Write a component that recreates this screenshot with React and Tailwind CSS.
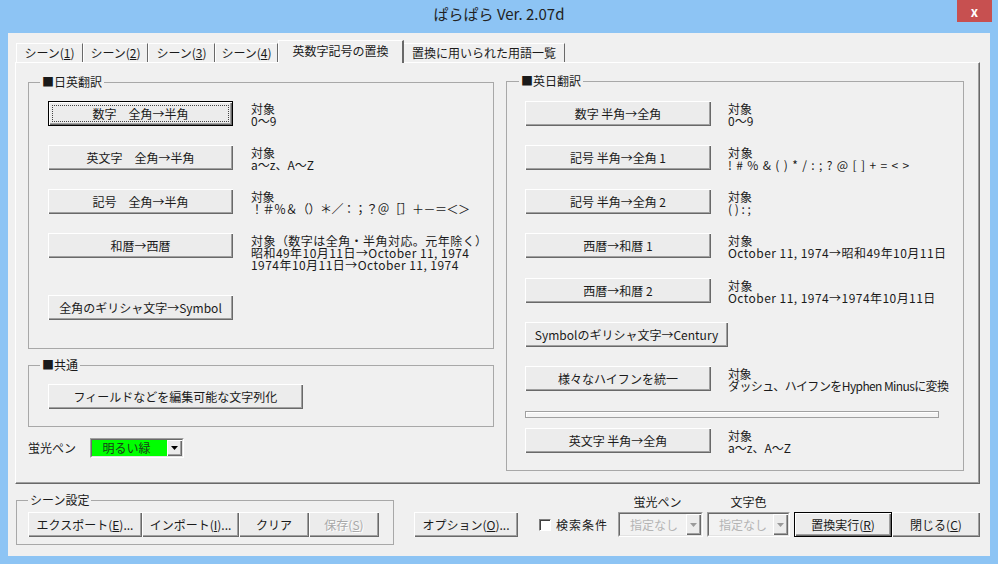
import React from 'react';

const SH = 'shadow-[inset_1px_1px_0_#ffffff,inset_-1px_-1px_0_#696969,inset_-2px_-2px_0_#a0a0a0]';

function Btn({ children, className = '', focus = false, def = false, disabled = false }) {
  return (
    <div
      className={`relative flex shrink-0 items-center justify-center bg-[#ececec] text-[12px] leading-[14px] whitespace-nowrap ${SH} ${
        disabled ? 'text-[#a8a8a8] [text-shadow:1px_1px_0_#ffffff]' : 'text-[#1a1a1a]'
      } ${focus || def ? 'border border-black' : ''} ${className}`}
    >
      {focus && <div className="absolute inset-[3px] border border-dotted border-[#444]" />}
      <span className="relative">{children}</span>
    </div>
  );
}

function Desc({ lines, className = '' }) {
  return (
    <div className={`text-[12px] leading-[12px] pt-[2px] text-[#1a1a1a] whitespace-nowrap ${className}`}>
      {lines.map((l, i) => (
        <div key={i}>{l}</div>
      ))}
    </div>
  );
}

function Row({ h, btn, bw, desc, dm, focus, descClass }) {
  return (
    <div className={`flex items-start ${h}`}>
      <Btn className={`${bw} h-[25px]`} focus={focus}>
        {btn}
      </Btn>
      {desc && <Desc lines={desc} className={`${dm} ${descClass || ''}`} />}
    </div>
  );
}

function Arrow({ color = '#000' }) {
  return (
    <svg width="7" height="4" viewBox="0 0 7 4">
      <path d="M0 0 L7 0 L3.5 4 Z" fill={color} />
    </svg>
  );
}

function Combo({ text, w, green = false }) {
  return (
    <div
      className={`flex shrink-0 border border-t-[#a0a0a0] border-l-[#a0a0a0] border-b-white border-r-white ${w} ${
        green ? 'h-[20px]' : 'h-[25px]'
      }`}
    >
      <div className="flex flex-1 border border-t-[#696969] border-l-[#696969] border-b-[#e3e3e3] border-r-[#e3e3e3]">
        <div
          className={`flex-1 flex items-center text-[12px] leading-[14px] ${
            green ? 'bg-[#00ff00] text-[#1a3a1a] justify-center pr-[6px]' : 'bg-[#f2f2f2] text-[#b4b4b4] pl-[10px]'
          }`}
        >
          {text}
        </div>
        <div className={`flex items-center justify-center w-[15px] bg-[#ececec] ${SH}`}>
          <Arrow color={green ? '#000' : '#9a9a9a'} />
        </div>
      </div>
    </div>
  );
}

export default function App() {
  const tabs = [
    { pre: 'シーン(', k: '1', post: ')', w: 'w-[67px]' },
    { pre: 'シーン(', k: '2', post: ')', w: 'w-[65px]' },
    { pre: 'シーン(', k: '3', post: ')', w: 'w-[67px]' },
    { pre: 'シーン(', k: '4', post: ')', w: 'w-[63px]' },
  ];
  return (
    <div className="w-[998px] h-[564px] bg-[#8dc4f4] flex flex-col font-['Noto_Sans_CJK_JP','Noto_Sans',sans-serif] overflow-hidden">
      {/* title bar */}
      <div className="relative h-[33px] shrink-0 flex justify-center pt-[5px]">
        <span className="text-[15px] leading-[18px] text-[#222]">ぱらぱら Ver. 2.07d</span>
        <div className="absolute top-0 right-[6px] w-[35px] h-[22px] bg-[#c75050] flex items-center justify-center text-white text-[13px] font-bold leading-none">
          x
        </div>
      </div>

      {/* client */}
      <div className="mx-[8px] h-[523px] bg-[#f0f0f0] flex flex-col">
        {/* tabs */}
        <div className="h-[29px] flex items-end pl-[8px] shrink-0">
          {tabs.map((t, i) => (
            <div
              key={i}
              className={`${t.w} h-[19px] flex items-center justify-center border-l border-t border-l-white border-t-white border-r border-r-[#696969] text-[12px] leading-[14px] text-[#1a1a1a]`}
            >
              {t.pre}
              <u>{t.k}</u>
              {t.post}
            </div>
          ))}
          <div className="relative z-10 -mb-px w-[126px] h-[23px] pb-[3px] flex items-center justify-center bg-[#f0f0f0] border-l border-t border-l-white border-t-white border-r-2 border-r-[#696969] text-[12px] leading-[14px] text-[#1a1a1a]">
            英数字記号の置換
          </div>
          <div className="w-[161px] h-[19px] flex items-center justify-center border-t border-t-white border-r border-r-[#696969] text-[12px] leading-[14px] text-[#1a1a1a]">
            置換に用いられた用語一覧
          </div>
        </div>

        {/* panel */}
        <div className="ml-[7px] w-[965px] h-[422px] shrink-0 border-l border-t border-l-white border-t-white border-r border-b border-r-[#696969] border-b-[#696969] shadow-[inset_-1px_-1px_0_#a0a0a0] flex pt-[11px] pl-[12px] gap-[12px]">
          {/* left column */}
          <div className="w-[466px] flex flex-col mt-[1px]">
            <fieldset className="border border-[#a8a8a8] p-0 m-0">
              <legend className="ml-[11px] px-[2px] text-[12px] leading-[14px] text-[#1a1a1a]">■日英翻訳</legend>
              <div className="pl-[19px] pt-[12px] pb-[28px] flex flex-col">
                <Row h="h-[44px]" bw="w-[185px]" dm="ml-[18px]" focus btn="数字　全角→半角" desc={['対象', '0〜9']} />
                <Row h="h-[44px]" bw="w-[185px]" dm="ml-[18px]" btn="英文字　全角→半角" desc={['対象', 'a〜z、A〜Z']} />
                <Row
                  h="h-[44px]"
                  bw="w-[185px]"
                  dm="ml-[18px]"
                  btn="記号　全角→半角"
                  desc={['対象', '！＃％＆（）＊／：；？＠［］＋－＝＜＞']}
                  descClass="tracking-[-0.5px]"
                />
                <Row
                  h="h-[62px]"
                  bw="w-[185px]"
                  dm="ml-[18px]"
                  btn="和暦→西暦"
                  desc={['対象（数字は全角・半角対応。元年除く）', '昭和49年10月11日→October 11, 1974', '1974年10月11日→October 11, 1974']}
                  descClass="tracking-[0.45px]"
                />
                <Row h="h-[25px]" bw="w-[185px]" btn="全角のギリシャ文字→Symbol" />
              </div>
            </fieldset>

            <fieldset className="border border-[#a8a8a8] p-0 m-0 mt-[9px]">
              <legend className="ml-[11px] px-[2px] text-[12px] leading-[14px] text-[#1a1a1a]">■共通</legend>
              <div className="pl-[19px] pt-[12px] pb-[17px] flex">
                <Btn className="w-[255px] h-[25px]">フィールドなどを編集可能な文字列化</Btn>
              </div>
            </fieldset>

            <div className="mt-[11px] flex items-center">
              <span className="text-[12px] leading-[14px] text-[#1a1a1a] w-[62px]">蛍光ペン</span>
              <Combo green text="明るい緑" w="w-[94px]" />
            </div>
          </div>

          {/* right column */}
          <div className="w-[458px] flex flex-col">
            <fieldset className="border border-[#a8a8a8] p-0 m-0">
              <legend className="ml-[12px] px-[2px] text-[12px] leading-[14px] text-[#1a1a1a]">■英日翻訳</legend>
              <div className="pl-[18px] pt-[13px] pb-[17px] flex flex-col">
                <Row h="h-[44px]" bw="w-[186px]" dm="ml-[17px]" btn="数字 半角→全角" desc={['対象', '0〜9']} />
                <Row
                  h="h-[44px]"
                  bw="w-[186px]"
                  dm="ml-[17px]"
                  btn="記号 半角→全角 1"
                  desc={['対象', '! # % & ( ) * / : ; ? @ [ ] + = < >']}
                  descClass="tracking-[0.85px]"
                />
                <Row h="h-[44px]" bw="w-[186px]" dm="ml-[17px]" btn="記号 半角→全角 2" desc={['対象', '( ) : ;']} />
                <Row
                  h="h-[45px]"
                  bw="w-[186px]"
                  dm="ml-[17px]"
                  btn="西暦→和暦 1"
                  desc={['対象', 'October 11, 1974→昭和49年10月11日']}
                  descClass="tracking-[0.45px]"
                />
                <Row
                  h="h-[44px]"
                  bw="w-[186px]"
                  dm="ml-[17px]"
                  btn="西暦→和暦 2"
                  desc={['対象', 'October 11, 1974→1974年10月11日']}
                  descClass="tracking-[0.45px]"
                />
                <Row h="h-[44px]" bw="w-[203px]" btn="Symbolのギリシャ文字→Century" />
                <Row
                  h="h-[45px]"
                  bw="w-[186px]"
                  dm="ml-[17px]"
                  btn="様々なハイフンを統一"
                  desc={['対象', 'ダッシュ、ハイフンをHyphen Minusに変換']}
                  descClass="tracking-[-0.6px]"
                />
                <div className="h-[17px]">
                  <div className="w-[414px] h-[7px] border border-[#a0a0a0] bg-[#f4f4f4] shadow-[inset_1px_1px_0_#ffffff]" />
                </div>
                <Row h="h-[25px]" bw="w-[186px]" dm="ml-[17px]" btn="英文字 半角→全角" desc={['対象', 'a〜z、A〜Z']} />
              </div>
            </fieldset>
          </div>
        </div>

        {/* bottom row */}
        <div className="flex items-start pt-[9px] pl-[8px]">
          <fieldset className="border border-[#a8a8a8] p-0 m-0 shrink-0">
            <legend className="ml-[11px] px-[2px] text-[12px] leading-[14px] text-[#1a1a1a]">シーン設定</legend>
            <div className="pl-[11px] pr-[14px] pt-[5px] pb-[7px] flex">
              <Btn className="w-[114px] h-[25px]">
                エクスポート(<u>E</u>)...
              </Btn>
              <Btn className="w-[97px] h-[25px]">
                インポート(<u>I</u>)...
              </Btn>
              <Btn className="w-[70px] h-[25px]">クリア</Btn>
              <Btn className="w-[70px] h-[25px]" disabled>
                保存(<u>S</u>)
              </Btn>
            </div>
          </fieldset>

          <Btn className="ml-[20px] mt-[19px] w-[104px] h-[25px]">
            オプション(<u>O</u>)...
          </Btn>

          <div className="ml-[21px] mt-[25px] flex items-center w-[69px]">
            <div className="w-[12px] h-[12px] bg-white border border-t-[#808080] border-l-[#808080] border-b-white border-r-white shadow-[inset_1px_1px_0_#404040]" />
            <span className="ml-[5px] text-[12px] leading-[14px] text-[#1a1a1a] tracking-[1px]">検索条件</span>
          </div>

          <div className="ml-[10px] mt-[2px] flex flex-col items-center">
            <span className="text-[12px] leading-[14px] text-[#1a1a1a] pr-[6px]">蛍光ペン</span>
            <div className="mt-[3px]">
              <Combo text="指定なし" w="w-[85px]" />
            </div>
          </div>
          <div className="ml-[4px] mt-[2px] flex flex-col items-center">
            <span className="text-[12px] leading-[14px] text-[#1a1a1a]">文字色</span>
            <div className="mt-[3px]">
              <Combo text="指定なし" w="w-[83px]" />
            </div>
          </div>

          <Btn className="ml-[4px] mt-[19px] w-[98px] h-[25px]" def>
            置換実行(<u>R</u>)
          </Btn>
          <Btn className="mt-[19px] w-[88px] h-[25px]">
            閉じる(<u>C</u>)
          </Btn>
        </div>
      </div>
    </div>
  );
}
